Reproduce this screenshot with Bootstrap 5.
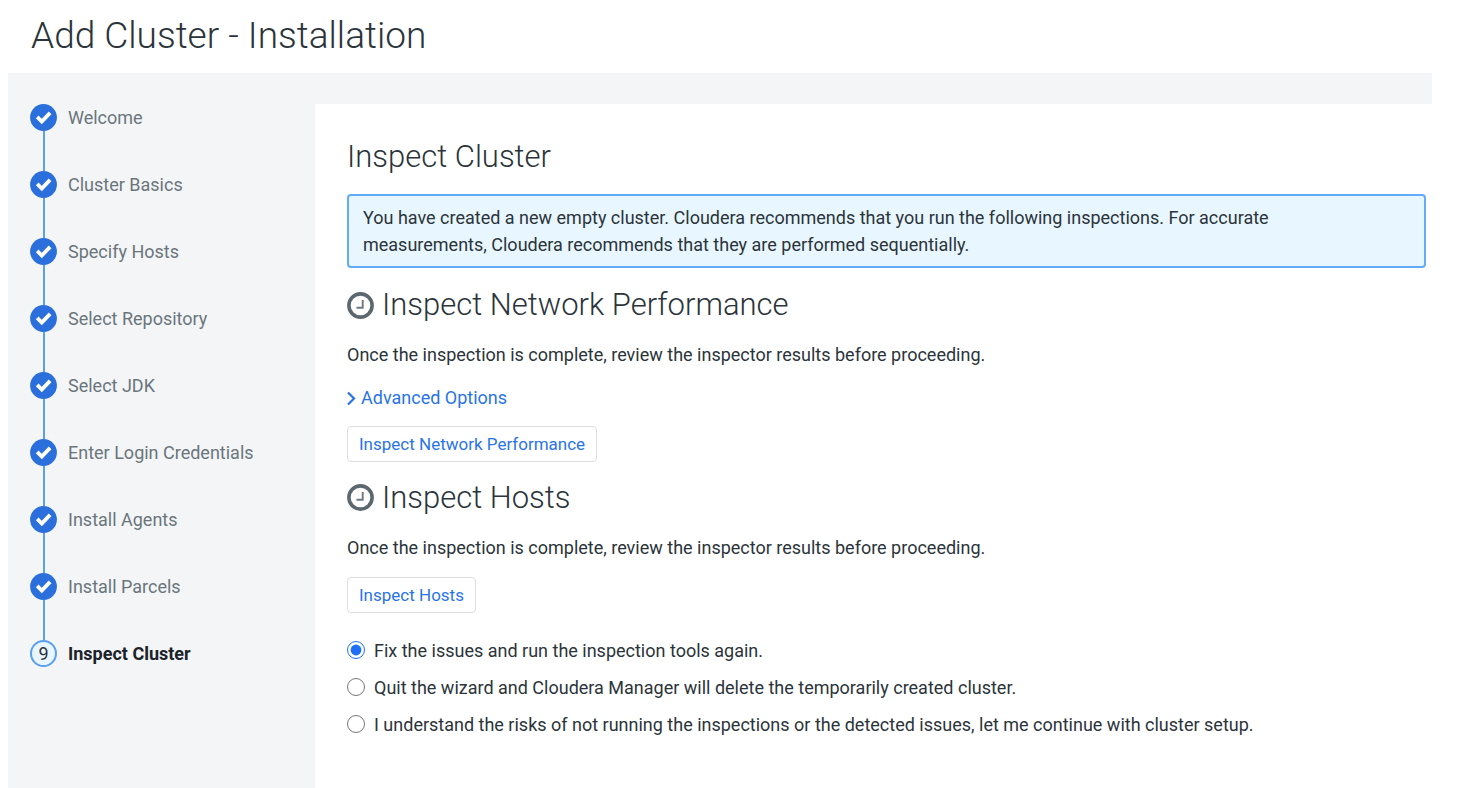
<!DOCTYPE html>
<html lang="en">
<head>
<meta charset="utf-8">
<meta name="viewport" content="width=device-width, initial-scale=1">
<title>Add Cluster - Installation</title>
<link href="https://cdn.jsdelivr.net/npm/bootstrap@5.3.0/dist/css/bootstrap.min.css" rel="stylesheet">
<style>
  body { font-family: Roboto, "Liberation Sans", sans-serif; font-size: 18px; line-height: 27px; color: #2b343a; background: #fff; }
  .page-title { font-size: 37px; line-height: 44px; font-weight: 300; padding: 14px 23px 15px; }
  .wizard-page { min-height: 100vh; margin: 0 40px 0 8px; }
  .wizard-body { background: #f3f5f7; }
  .wizard-steps { width: 307px; padding: 31px 22px; }
  .wizard-step { height: 67px; gap: 11px; color: #6b757c; }
  .wizard-step a { color: inherit; }
  .step-marker { width: 27px; }
  .step-marker svg, .step-number { width: 27px; height: 27px; flex: none; }
  .step-line { width: 2px; background: #5a9ff0; }
  .step-number { border: 2px solid #5a9ff0; background: #e8f6ff; color: #2b343a; font-weight: 400; line-height: 23px; }
  .wizard-step.current { color: #1b2329; font-weight: 700; }
  .wizard-content { background: #fff; padding: 33px 6px 32px 32px; margin-top: 31px; min-width: 0; }
  .section-title { font-size: 31px; line-height: 40px; font-weight: 300; margin: 0; }
  .section-title svg { width: 27px; height: 27px; flex: none; }
  .info-note { background: #e8f6ff; border: 2px solid #62abfc; border-radius: 4px; padding: 8px 32px 8px 14px; color: inherit; margin: 17px 0; }
  .wizard-link { color: #2a74e6; }
  .btn-inspect { --bs-btn-color: #2a74e6; --bs-btn-bg: #fff; --bs-btn-border-color: #dedfe0; --bs-btn-hover-color: #1c5fc7; --bs-btn-hover-border-color: #b9bdc1; --bs-btn-font-size: 17px; --bs-btn-line-height: 24px; --bs-btn-padding-x: 11px; --bs-btn-padding-y: 5px; --bs-btn-border-radius: 4px; }
  .advanced { margin-bottom: 14px; }
  .choices { gap: 10px; }
  .choice { gap: 9px; }
  .choice input { width: 18px; height: 18px; margin: 0; accent-color: #1d6ff5; flex: none; }
</style>
</head>
<body>
<svg class="d-none" xmlns="http://www.w3.org/2000/svg">
  <symbol id="step-done" viewBox="0 0 27 27">
    <circle cx="13.500" cy="13.500" r="13.400" fill="#2a6fdb"/>
    <path d="M7.200 12.900l4.600 4.600 8.300-8.600" fill="none" stroke="#fff" stroke-width="3.800"/>
  </symbol>
  <symbol id="clock" viewBox="0 0 27 27">
    <circle cx="13.500" cy="13.500" r="11.600" fill="none" stroke="#5c6870" stroke-width="3.600"/>
    <path d="M15.700 8v7.700H9.500" fill="none" stroke="#6d7880" stroke-width="1.900"/>
  </symbol>
</svg>
<div class="wizard-page d-flex flex-column">
  <header><h1 class="page-title mb-0">Add Cluster - Installation</h1></header>
  <div class="wizard-body d-flex flex-grow-1">
    <nav class="wizard-steps flex-shrink-0" aria-label="Wizard steps">
      <ol class="list-unstyled mb-0">
        <li class="wizard-step d-flex"><span class="step-marker d-flex flex-column align-items-center"><svg aria-hidden="true"><use href="#step-done"/></svg><span class="step-line flex-grow-1"></span></span><a class="text-decoration-none" href="#">Welcome</a></li>
        <li class="wizard-step d-flex"><span class="step-marker d-flex flex-column align-items-center"><svg aria-hidden="true"><use href="#step-done"/></svg><span class="step-line flex-grow-1"></span></span><a class="text-decoration-none" href="#">Cluster Basics</a></li>
        <li class="wizard-step d-flex"><span class="step-marker d-flex flex-column align-items-center"><svg aria-hidden="true"><use href="#step-done"/></svg><span class="step-line flex-grow-1"></span></span><a class="text-decoration-none" href="#">Specify Hosts</a></li>
        <li class="wizard-step d-flex"><span class="step-marker d-flex flex-column align-items-center"><svg aria-hidden="true"><use href="#step-done"/></svg><span class="step-line flex-grow-1"></span></span><a class="text-decoration-none" href="#">Select Repository</a></li>
        <li class="wizard-step d-flex"><span class="step-marker d-flex flex-column align-items-center"><svg aria-hidden="true"><use href="#step-done"/></svg><span class="step-line flex-grow-1"></span></span><a class="text-decoration-none" href="#">Select JDK</a></li>
        <li class="wizard-step d-flex"><span class="step-marker d-flex flex-column align-items-center"><svg aria-hidden="true"><use href="#step-done"/></svg><span class="step-line flex-grow-1"></span></span><a class="text-decoration-none" href="#">Enter Login Credentials</a></li>
        <li class="wizard-step d-flex"><span class="step-marker d-flex flex-column align-items-center"><svg aria-hidden="true"><use href="#step-done"/></svg><span class="step-line flex-grow-1"></span></span><a class="text-decoration-none" href="#">Install Agents</a></li>
        <li class="wizard-step d-flex"><span class="step-marker d-flex flex-column align-items-center"><svg aria-hidden="true"><use href="#step-done"/></svg><span class="step-line flex-grow-1"></span></span><a class="text-decoration-none" href="#">Install Parcels</a></li>
        <li class="wizard-step current d-flex"><span class="step-marker"><span class="step-number d-block rounded-circle text-center">9</span></span><a class="text-decoration-none" href="#" aria-current="step">Inspect Cluster</a></li>
      </ol>
    </nav>
    <main class="wizard-content flex-grow-1">
      <h2 class="section-title">Inspect Cluster</h2>
      <div class="info-note alert">You have created a new empty cluster. Cloudera recommends that you run the following inspections. For accurate measurements, Cloudera recommends that they are performed sequentially.</div>
      <section class="mb-3">
        <h2 class="section-title d-flex align-items-center gap-2"><svg aria-hidden="true"><use href="#clock"/></svg>Inspect Network Performance</h2>
        <p class="my-3">Once the inspection is complete, review the inspector results before proceeding.</p>
        <p class="advanced"><a class="wizard-link d-inline-flex align-items-center text-decoration-none" href="#"><svg class="me-1" width="10" height="14" viewBox="0 0 10 14" aria-hidden="true"><path d="M1 1.500l6 6-6 6" fill="none" stroke="currentColor" stroke-width="2.200"/></svg>Advanced Options</a></p>
        <button type="button" class="btn btn-inspect">Inspect Network Performance</button>
      </section>
      <section class="mb-4">
        <h2 class="section-title d-flex align-items-center gap-2"><svg aria-hidden="true"><use href="#clock"/></svg>Inspect Hosts</h2>
        <p class="my-3">Once the inspection is complete, review the inspector results before proceeding.</p>
        <button type="button" class="btn btn-inspect">Inspect Hosts</button>
      </section>
      <div class="choices vstack">
        <div class="choice d-flex align-items-center"><input type="radio" name="next" id="fix" checked><label for="fix">Fix the issues and run the inspection tools again.</label></div>
        <div class="choice d-flex align-items-center"><input type="radio" name="next" id="quit"><label for="quit">Quit the wizard and Cloudera Manager will delete the temporarily created cluster.</label></div>
        <div class="choice d-flex align-items-center"><input type="radio" name="next" id="risk"><label for="risk">I understand the risks of not running the inspections or the detected issues, let me continue with cluster setup.</label></div>
      </div>
    </main>
  </div>
</div>
<script src="https://cdn.jsdelivr.net/npm/bootstrap@5.3.0/dist/js/bootstrap.bundle.min.js"></script>
</body>
</html>
